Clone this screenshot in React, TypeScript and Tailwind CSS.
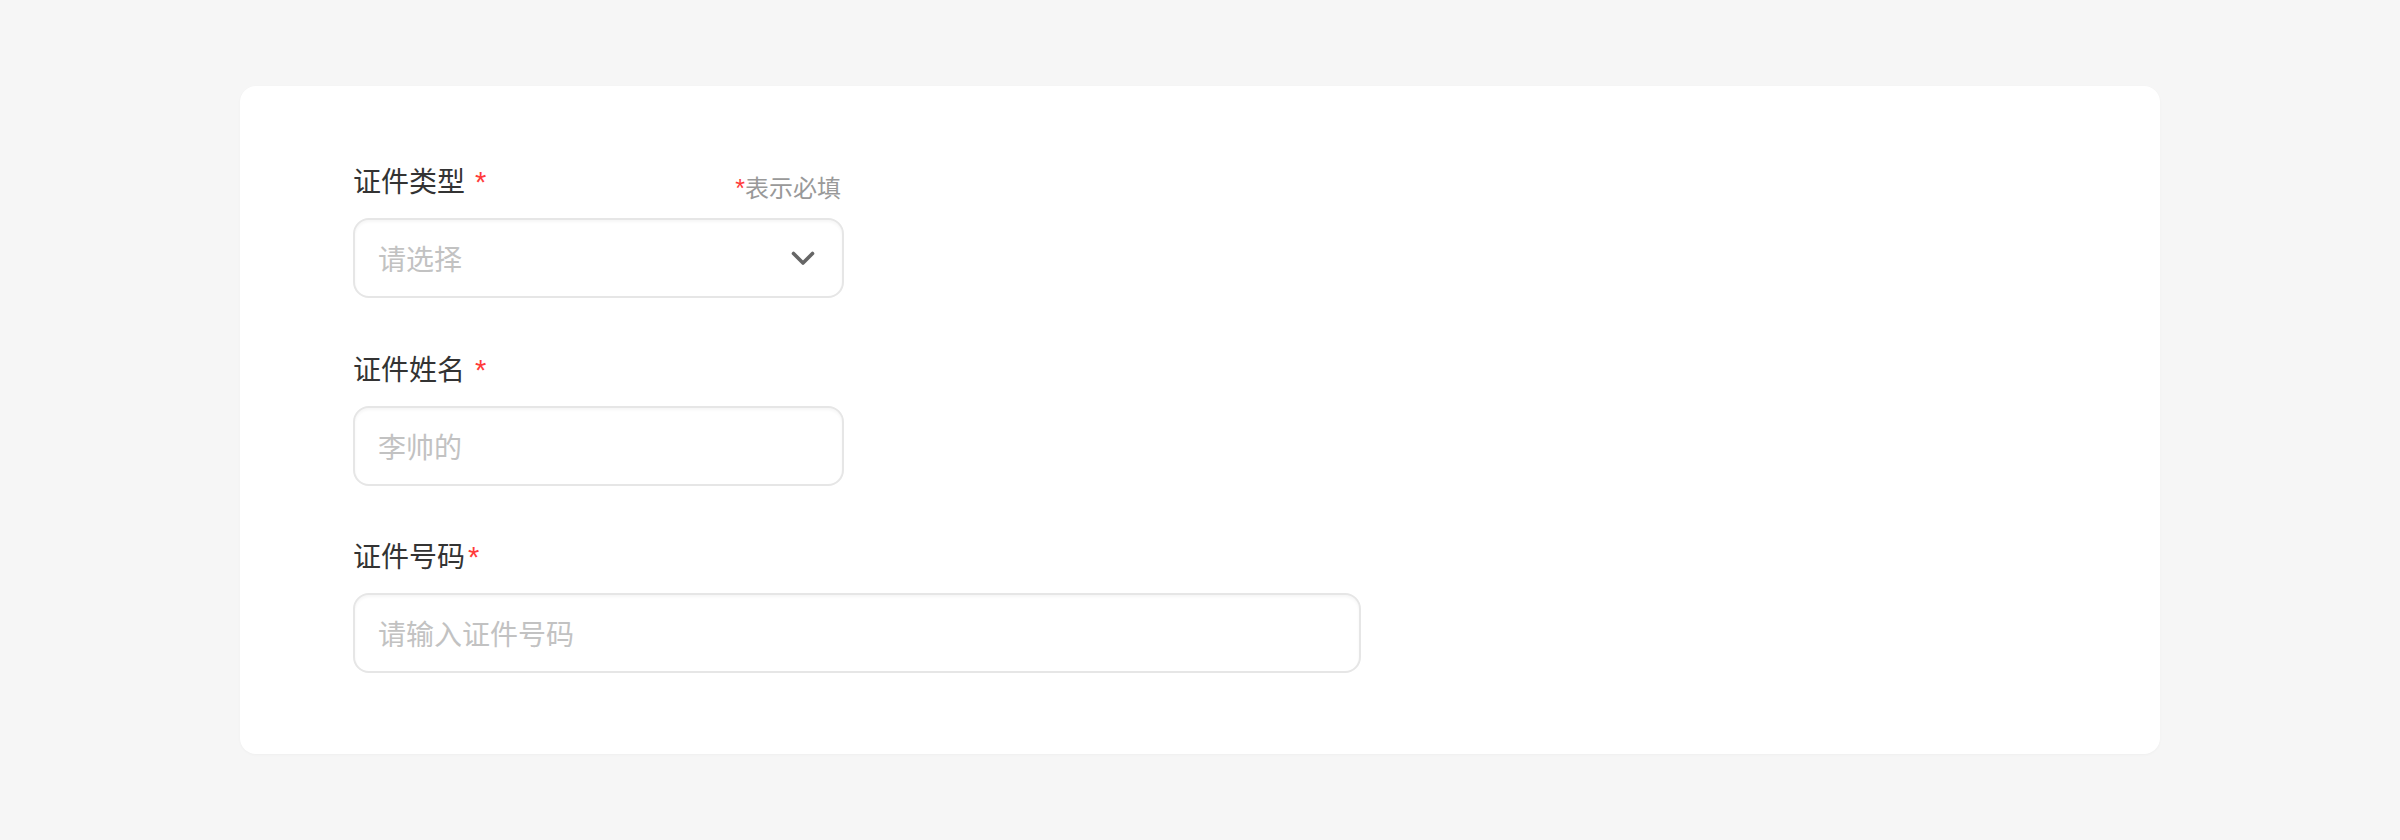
import React from "react";

const font = { fontFamily: '"Noto Sans CJK SC", "Noto Sans", sans-serif' };
const starFont = { fontFamily: '"Liberation Sans", Arial, sans-serif' };

function Star({ size = "text-[29px]" }: { size?: string }) {
  return (
    <span className={`${size} leading-none text-[#ff3b3b]`} style={starFont}>
      *
    </span>
  );
}

function Label({ text, spaced = true }: { text: string; spaced?: boolean }) {
  return (
    <span className="h-[40px] text-[28px] leading-[40px] text-[#333333] flex items-baseline">
      <span>{text}</span>
      <span className={`${spaced ? "ml-[10px]" : "ml-[3px]"} leading-none`}>
        <Star />
      </span>
    </span>
  );
}

function TextField({ placeholder, wide = false }: { placeholder: string; wide?: boolean }) {
  return (
    <input
      type="text"
      placeholder={placeholder}
      className={`${wide ? "w-[1008px]" : "w-[491px]"} h-[80px] px-[23px] rounded-[16px] border-2 border-[#e6e6e6] bg-white text-[28px] text-[#333333] placeholder:text-[#c2c2c2] shadow-[inset_0_2px_3px_rgba(0,0,0,0.04)] outline-none`}
      style={font}
    />
  );
}

export default function App() {
  return (
    <div className="min-h-screen bg-[#f6f6f6] pt-[86px] px-[240px]" style={font}>
      <div className="bg-white rounded-[16px] shadow-[0_1px_3px_rgba(0,0,0,0.03)] h-[668px] pl-[113px] pt-[74px]">
        {/* 证件类型 */}
        <div className="flex flex-col gap-[18px]">
          <div className="w-[491px] h-[40px] flex items-end justify-between pr-[3px]">
            <Label text="证件类型" />
            <span className="h-[26px] text-[24px] leading-[26px] text-[#999999] flex items-baseline">
              <Star size="text-[25px]" />
              <span>表示必填</span>
            </span>
          </div>
          <div className="w-[491px] h-[80px] px-[23px] rounded-[16px] border-2 border-[#e6e6e6] shadow-[inset_0_2px_3px_rgba(0,0,0,0.04)] flex items-center justify-between cursor-pointer">
            <span className="text-[28px] text-[#c2c2c2]">请选择</span>
            <svg width="24" height="15" viewBox="0 0 24 15" className="mr-[4px]">
              <polyline
                points="2.5,2.5 12,12 21.5,2.5"
                fill="none"
                stroke="#666666"
                strokeWidth="3.6"
                strokeLinecap="round"
                strokeLinejoin="round"
              />
            </svg>
          </div>
        </div>

        {/* 证件姓名 */}
        <div className="flex flex-col gap-[18px] mt-[50px]">
          <Label text="证件姓名" />
          <TextField placeholder="李帅的" />
        </div>

        {/* 证件号码 */}
        <div className="flex flex-col gap-[18px] mt-[49px]">
          <Label text="证件号码" spaced={false} />
          <TextField placeholder="请输入证件号码" wide />
        </div>
      </div>
    </div>
  );
}
